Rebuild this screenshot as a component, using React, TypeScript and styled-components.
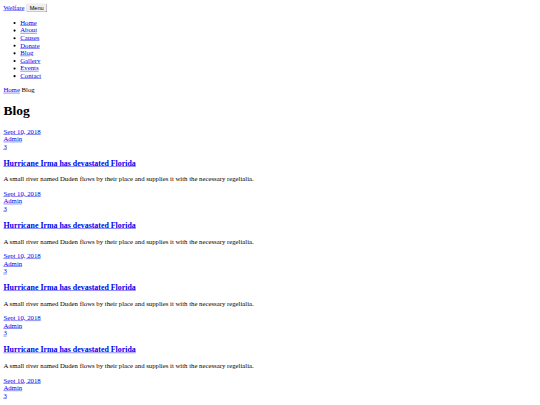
import React from "react";
import styled, { createGlobalStyle } from "styled-components";

const Global = createGlobalStyle`
  html, body { overflow: hidden; }
  body {
    margin: 0;
    font-family: "Liberation Serif", "Times New Roman", serif;
    font-size: 16px;
    color: #000;
    background: #fff;
  }
  a { color: #0000ee; }
`;

const Page = styled.div`
  width: 1280px;
  padding: 8px;
  box-sizing: border-box;
  transform: scale(0.421875);
  transform-origin: 0 0;
`;

const Header = styled.nav`
  display: block;
`;

const Brand = styled.a`
  font-size: 16px;
`;

const MenuButton = styled.button`
  font-family: "Liberation Sans", Arial, sans-serif;
  font-size: 13.333px;
  margin-left: 4px;
  padding: 1px 6px;
  border: 2px outset #e0e0e0;
  border-radius: 3px;
  background: #efefef;
  color: #000;
`;

const NavList = styled.ul`
  margin: 16px 0;
  padding-left: 40px;
  list-style: disc;
`;

const NavItem = styled.li`
  line-height: normal;
`;

const Crumbs = styled.p`
  margin: 16px 0;
`;

const Title = styled.h1`
  font-size: 32px;
  margin: 21.44px 0;
`;

const Post = styled.div`
  display: block;
`;

const Meta = styled.div`
  display: flex;
  flex-direction: column;
  align-items: flex-start;
`;

const PostTitle = styled.h3`
  font-size: 18.72px;
  margin: 18.72px 0;
`;

const Excerpt = styled.p`
  margin: 16px 0;
`;

const navItems = ["Home", "About", "Causes", "Donate", "Blog", "Gallery", "Events", "Contact"];

export default function App() {
  const posts = [1, 2, 3, 4, 5, 6];
  return (
    <>
      <Global />
      <Page>
        <Header>
          <Brand href="#">Welfare</Brand>
          <MenuButton>Menu</MenuButton>
          <NavList>
            {navItems.map((n) => (
              <NavItem key={n}>
                <a href="#">{n}</a>
              </NavItem>
            ))}
          </NavList>
        </Header>
        <Crumbs>
          <a href="#">Home</a> Blog
        </Crumbs>
        <Title>Blog</Title>
        {posts.map((p) => (
          <Post key={p}>
            <Meta>
              <a href="#">Sept 10, 2018</a>
              <a href="#">Admin</a>
              <a href="#">3</a>
            </Meta>
            <PostTitle>
              <a href="#">Hurricane Irma has devastated Florida</a>
            </PostTitle>
            <Excerpt>A small river named Duden flows by their place and supplies it with the necessary regelialia.</Excerpt>
          </Post>
        ))}
      </Page>
    </>
  );
}
